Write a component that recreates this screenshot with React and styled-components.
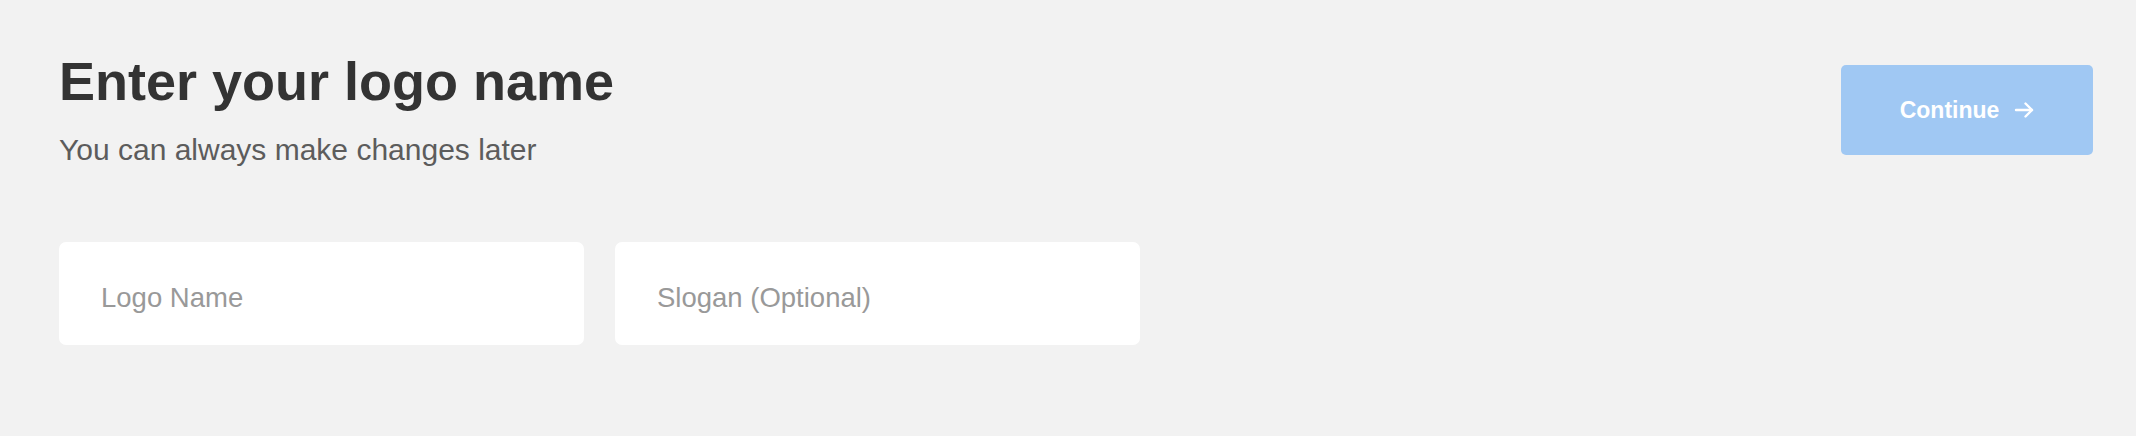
import React from "react";
import styled, { createGlobalStyle } from "styled-components";

const Global = createGlobalStyle`
  html, body {
    margin: 0;
    padding: 0;
    background: #f2f2f2;
  }
  body {
    font-family: "Liberation Sans", Arial, Helvetica, sans-serif;
  }
`;

const Page = styled.div`
  box-sizing: border-box;
  min-height: 436px;
  padding: 49px 43px 0 59px;
  background: #f2f2f2;
`;

const Header = styled.header`
  display: flex;
  justify-content: space-between;
  align-items: flex-start;
`;

const TitleBlock = styled.div`
  display: flex;
  flex-direction: column;
  gap: 19px;
`;

const Title = styled.h1`
  margin: 0;
  font-size: 54px;
  line-height: 64px;
  font-weight: 700;
  color: #333333;
  letter-spacing: 0;
`;

const Subtitle = styled.p`
  margin: 0;
  font-size: 30px;
  line-height: 36px;
  font-weight: 400;
  color: #5c5c5c;
`;

const ContinueButton = styled.button`
  margin-top: 16px;
  width: 252px;
  height: 90px;
  border: none;
  border-radius: 5px;
  background: #a0c8f3;
  color: #ffffff;
  font-family: "Liberation Sans", Arial, sans-serif;
  font-size: 23px;
  font-weight: 700;
  display: flex;
  align-items: center;
  justify-content: center;
  gap: 15px;
  cursor: not-allowed;
  padding: 0;
`;

const Fields = styled.div`
  display: flex;
  gap: 31px;
  margin-top: 74px;
`;

const Field = styled.input`
  box-sizing: border-box;
  width: 525px;
  height: 103px;
  border: none;
  border-radius: 7px;
  background: #ffffff;
  padding: 8px 0 0 42px;
  font-family: "Liberation Sans", Arial, sans-serif;
  font-size: 27.5px;
  color: #333;
  outline: none;
  &::placeholder {
    color: #999999;
    opacity: 1;
  }
`;

const Arrow = () => (
  <svg width="20" height="16" viewBox="0 0 20 16" fill="none" stroke="#fff" strokeWidth="2.4" strokeLinecap="round" strokeLinejoin="round">
    <path d="M2 8h16" />
    <path d="M11.5 1.5L18 8l-6.5 6.5" />
  </svg>
);

export default function App() {
  return (
    <>
      <Global />
      <Page>
        <Header>
          <TitleBlock>
            <Title>Enter your logo name</Title>
            <Subtitle>You can always make changes later</Subtitle>
          </TitleBlock>
          <ContinueButton type="button">
            Continue
            <Arrow />
          </ContinueButton>
        </Header>
        <Fields>
          <Field placeholder="Logo Name" />
          <Field placeholder="Slogan (Optional)" />
        </Fields>
      </Page>
    </>
  );
}
